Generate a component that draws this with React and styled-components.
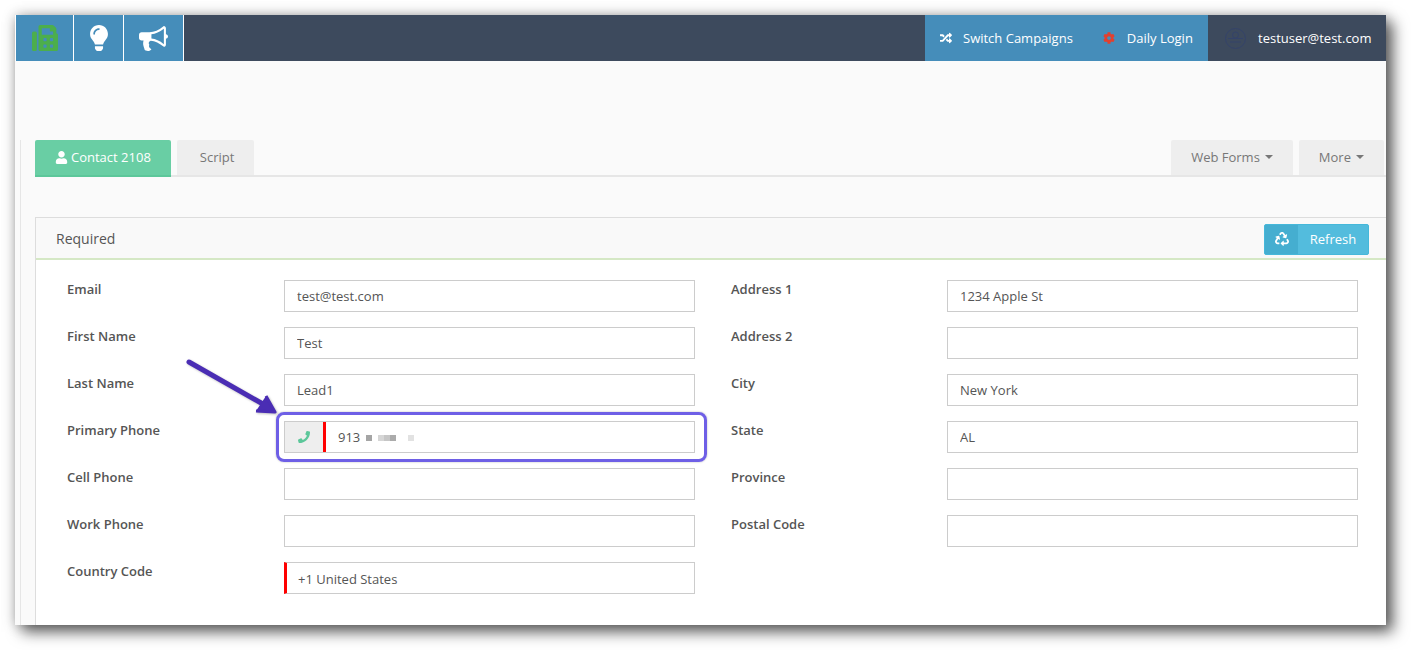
import React from 'react';
import styled, { createGlobalStyle } from 'styled-components';
import { FaFax, FaLightbulb, FaRandom, FaCog, FaUser, FaRecycle, FaPhone } from 'react-icons/fa';

const GlobalStyle = createGlobalStyle`
  html, body {
    margin: 0;
    padding: 0;
    background: #fff;
    overflow: hidden;
  }
  * {
    box-sizing: border-box;
  }
`;

const Page = styled.div`
  width: 1411px;
  height: 650px;
  padding: 15px 25px 25px 15px;
  font-family: "Open Sans", sans-serif;
  font-size: 13px;
  color: #555;
`;

const Window = styled.div`
  height: 610px;
  display: flex;
  flex-direction: column;
  background: #fafafa;
  overflow: hidden;
  box-shadow: 0 0 12px rgba(0, 0, 0, 0.25), 7px 7px 14px rgba(0, 0, 0, 0.6);
`;

const Navbar = styled.div`
  height: 46px;
  flex: none;
  display: flex;
  background: #3d4a5d;
`;

const IconTabs = styled.div`
  display: flex;
  gap: 1px;
  padding: 0 1px;
  background: #fff;
`;

const IconTab = styled.div`
  width: ${(p) => p.$width}px;
  display: flex;
  align-items: center;
  justify-content: center;
  background: #458dba;
  color: ${(p) => p.$color || '#fff'};
  font-size: 26px;
`;

const NavRight = styled.div`
  margin-left: auto;
  display: flex;
  white-space: nowrap;
`;

const NavLinks = styled.div`
  width: 283px;
  display: flex;
  align-items: center;
  padding-left: 15px;
  background: #458dba;
  color: #fff;
`;

const NavLink = styled.div`
  display: flex;
  align-items: center;
  gap: ${(p) => p.$gap}px;
  margin-right: 30px;
  svg {
    font-size: 12px;
    color: ${(p) => p.$icon || '#fff'};
  }
`;

const UserBox = styled.div`
  width: 178px;
  display: flex;
  align-items: center;
  padding-left: 17px;
  gap: 12px;
  color: #fff;
`;

const Avatar = styled.svg`
  width: 21px;
  height: 21px;
`;

const Content = styled.div`
  flex: 1;
  min-height: 0;
  margin: 79px 0 0 5px;
  padding-left: 14px;
  border-left: 1px solid #e6e6e6;
  display: flex;
  flex-direction: column;
`;

const Tabs = styled.div`
  height: 37px;
  flex: none;
  display: flex;
  gap: 6px;
  padding-right: 2px;
  border-bottom: 2px solid #e6e6e6;
`;

const Tab = styled.div`
  height: ${(p) => (p.$active ? 37 : 35)}px;
  padding: 0 20px 1px;
  display: flex;
  align-items: center;
  gap: 3px;
  white-space: nowrap;
  border-radius: 2px 2px 0 0;
  background: ${(p) => (p.$active ? '#69cea4' : '#eee')};
  border-bottom: ${(p) => (p.$active ? '2px solid #5cc79a' : 'none')};
  color: ${(p) => (p.$active ? '#fff' : '#777')};
  margin-left: ${(p) => (p.$push ? 'auto' : '0')};
`;

const ScriptTab = styled(Tab)`
  padding-left: 23px;
  padding-right: 20px;
`;

const Caret = styled.span`
  width: 0;
  height: 0;
  margin-left: 2px;
  border-left: 4px solid transparent;
  border-right: 4px solid transparent;
  border-top: 4px solid #777;
`;

const Panel = styled.div`
  flex: 1;
  margin-top: 40px;
  display: flex;
  flex-direction: column;
  background: #fff;
  border-left: 1px solid #ddd;
  border-top: 1px solid #ddd;
`;

const PanelHeader = styled.div`
  height: 42px;
  flex: none;
  display: flex;
  align-items: center;
  justify-content: space-between;
  padding: 0 17px 0 20px;
  background: #f9f9f9;
  border-bottom: 2px solid #d5e8c5;
  font-size: 14px;
`;

const RefreshButton = styled.button`
  height: 31px;
  width: 105px;
  margin-top: 2px;
  padding: 0;
  display: flex;
  align-items: stretch;
  background: #53bcdd;
  border: 1px solid #46b8da;
  border-radius: 2px;
  color: #fff;
  font: inherit;
  font-size: 13px;
`;

const RefreshIcon = styled.span`
  width: 33px;
  display: flex;
  align-items: center;
  justify-content: center;
  background: #45aed0;
  font-size: 14px;
`;

const RefreshLabel = styled.span`
  flex: 1;
  display: flex;
  align-items: center;
  justify-content: center;
`;

const Form = styled.div`
  flex: 1;
  display: flex;
  gap: 36px;
  padding: 20px 28px 0 31px;
`;

const Column = styled.div`
  width: ${(p) => p.$width}px;
  display: flex;
  flex-direction: column;
  gap: 15px;
`;

const Row = styled.div`
  display: flex;
  height: 32px;
`;

const Label = styled.label`
  flex: 1;
  font-weight: 600;
  line-height: 18px;
  color: #555;
`;

const Field = styled.div`
  position: relative;
  width: 411px;
  height: 32px;
  display: flex;
  background: #fff;
  border: 1px solid #ccc;
  border-left: ${(p) => (p.$marked ? '3px solid #f00' : '1px solid #ccc')};
`;

const Input = styled.input`
  flex: 1;
  min-width: 0;
  height: 100%;
  padding: ${(p) => (p.$nudge ? 2 : 0)}px 0 0 ${(p) => p.$pad || 12}px;
  border: none;
  outline: none;
  background: transparent;
  color: #555;
  font: inherit;
`;

const PhoneAddon = styled.span`
  width: 41px;
  flex: none;
  display: flex;
  align-items: center;
  justify-content: center;
  background: #eee;
  color: #5cc79a;
  border-right: 3px solid #f00;
  font-size: 12px;
`;

const Masked = styled.span`
  position: absolute;
  left: 81px;
  top: 13px;
  display: flex;
  height: 6px;
  filter: blur(0.4px);
`;

const MaskBit = styled.i`
  display: block;
  width: ${(p) => p.$width}px;
  margin-right: ${(p) => p.$gap || 0}px;
  background: ${(p) => p.$color};
`;

const Highlight = styled.div`
  position: absolute;
  left: -9px;
  top: -10px;
  width: 431px;
  height: 50px;
  border: 3px solid #6e5fe6;
  border-radius: 8px;
  box-shadow: 0 0 2px rgba(0, 0, 0, 0.3);
  pointer-events: none;
`;

const Arrow = styled.svg`
  position: absolute;
  left: -105px;
  top: -67px;
  width: 100px;
  height: 62px;
  overflow: visible;
  filter: drop-shadow(1px 1px 1px rgba(0, 0, 0, 0.25));
`;

const Bullhorn = styled.svg`
  width: 29px;
  height: 29px;
  fill: currentColor;
`;

const leftFields = [
  ['Email', 'test@test.com'],
  ['First Name', 'Test'],
  ['Last Name', 'Lead1'],
  ['Primary Phone', '913', 'phone'],
  ['Cell Phone', ''],
  ['Work Phone', ''],
  ['Country Code', '+1 United States', 'marked'],
];

const rightFields = [
  ['Address 1', '1234 Apple St'],
  ['Address 2', ''],
  ['City', 'New York'],
  ['State', 'AL'],
  ['Province', ''],
  ['Postal Code', ''],
];

function PhoneField({ value }) {
  return (
    <Field>
      <PhoneAddon>
        <FaPhone />
      </PhoneAddon>
      <Input $pad={12} readOnly value={value} />
      <Masked>
        <MaskBit $width={6} $gap={6} $color="#a5a5a5" />
        <MaskBit $width={6} $color="#d6d6d6" />
        <MaskBit $width={6} $color="#c6c6c6" />
        <MaskBit $width={6} $gap={12} $color="#ababab" />
        <MaskBit $width={6} $color="#e2e2e2" />
      </Masked>
      <Highlight />
      <Arrow viewBox="0 0 100 62">
        <path d="M9 7 L90 53" stroke="#4a2db4" strokeWidth="5" strokeLinecap="round" fill="none" />
        <path d="M86 41 L95 57 L76 56" stroke="#4a2db4" strokeWidth="3" strokeLinejoin="round" fill="#4a2db4" />
      </Arrow>
    </Field>
  );
}

function FormRow({ label, value, kind }) {
  return (
    <Row>
      <Label>{label}</Label>
      {kind === 'phone' ? (
        <PhoneField value={value} />
      ) : (
        <Field $marked={kind === 'marked'}>
          <Input $pad={kind === 'marked' ? 11 : 12} $nudge={kind === 'marked'} readOnly value={value} />
        </Field>
      )}
    </Row>
  );
}

export default function App() {
  return (
    <Page>
      <GlobalStyle />
      <Window>
        <Navbar>
          <IconTabs>
            <IconTab $width={57} $color="#4cae4c">
              <FaFax />
            </IconTab>
            <IconTab $width={49}>
              <FaLightbulb />
            </IconTab>
            <IconTab $width={59}>
              <Bullhorn viewBox="0 0 1792 1792">
                <path d="M1664 640q53 0 90.5 37.5t37.5 90.5-37.5 90.5-90.5 37.5v384q0 52-38 90t-90 38q-417-347-812-380-58 19-91 66t-31 100.5 40 92.5q-20 33-23 65.5t6 58 33.5 55 48 50 61.5 50.5q-29 58-111.5 83t-168.5 11.5-132-55.5q-7-23-29.5-87.5t-32-94.5-23-89-15-101 3.5-98.5 22-110.5h-122q-66 0-113-47t-47-113v-192q0-66 47-113t113-47h480q435 0 896-384 52 0 90 38t38 90v384zm-128 604v-954q-394 302-768 343v270q377 42 768 341z" />
              </Bullhorn>
            </IconTab>
          </IconTabs>
          <NavRight>
            <NavLinks>
              <NavLink $gap={11}>
                <FaRandom />
                Switch Campaigns
              </NavLink>
              <NavLink $gap={12} $icon="#e2402f">
                <FaCog />
                Daily Login
              </NavLink>
            </NavLinks>
            <UserBox>
              <Avatar viewBox="0 0 21 21">
                <circle cx="10.5" cy="10.5" r="10" fill="none" stroke="#34436a" strokeWidth="1" />
                <path d="M3 10.5 H18 M5 14 H16" stroke="#34436a" strokeWidth="1" fill="none" />
                <circle cx="10.5" cy="7" r="3" fill="none" stroke="#34436a" strokeWidth="1" />
              </Avatar>
              testuser@test.com
            </UserBox>
          </NavRight>
        </Navbar>
        <Content>
          <Tabs>
            <Tab $active>
              <FaUser size={13} />
              Contact 2108
            </Tab>
            <ScriptTab>Script</ScriptTab>
            <Tab $push>
              Web Forms <Caret />
            </Tab>
            <Tab>
              More <Caret />
            </Tab>
          </Tabs>
          <Panel>
            <PanelHeader>
              Required
              <RefreshButton>
                <RefreshIcon>
                  <FaRecycle />
                </RefreshIcon>
                <RefreshLabel>Refresh</RefreshLabel>
              </RefreshButton>
            </PanelHeader>
            <Form>
              <Column $width={628}>
                {leftFields.map(([label, value, kind]) => (
                  <FormRow key={label} label={label} value={value} kind={kind} />
                ))}
              </Column>
              <Column $width={627}>
                {rightFields.map(([label, value]) => (
                  <FormRow key={label} label={label} value={value} />
                ))}
              </Column>
            </Form>
          </Panel>
        </Content>
      </Window>
    </Page>
  );
}
